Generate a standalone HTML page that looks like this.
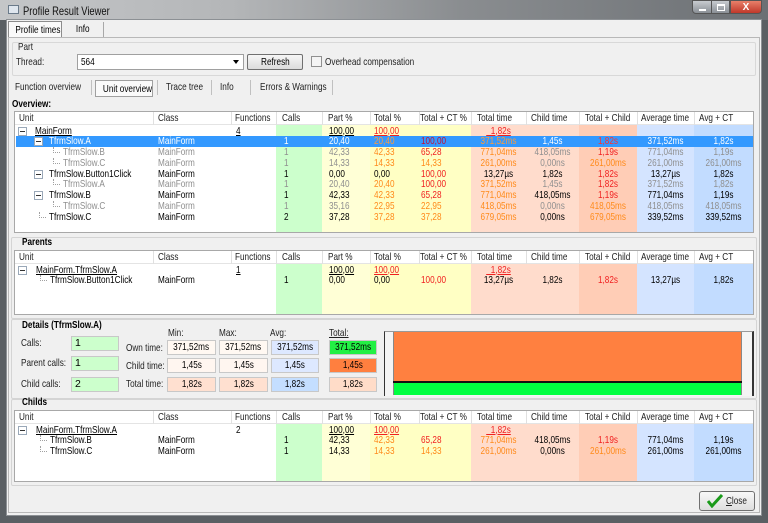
<!DOCTYPE html>
<html><head><meta charset="utf-8"><style>
*{margin:0;padding:0;box-sizing:border-box}
body{width:768px;height:523px;overflow:hidden;position:relative;background:#5a5f63;font-family:"Liberation Sans",sans-serif;font-size:10.5px;color:#000}
.abs{position:absolute}
.title{left:0;top:0;width:768px;height:20px;background:linear-gradient(90deg,#c4c6c8 0%,#b4b6b8 30%,#8a8d90 60%,#6c7074 100%)}
.client{left:6px;top:19px;width:756px;height:497px;background:#f0f0f0;border:1px solid #8c9094}
.g{position:absolute;left:14px;width:740px;background:#fff;border:1px solid #a8a8a8;overflow:hidden}
.g .bg{position:absolute;top:13px;bottom:0}
.hd{position:absolute;left:0;top:0;right:0;height:13px;background:#fff;border-bottom:1px solid #e4e4e4}
.hd span{position:absolute;top:0;line-height:13px;color:#222;font-size:10.5px;white-space:nowrap}
.hd i{position:absolute;top:0;height:13px;width:1px;background:#e0e0e0}
.r{position:absolute;left:0;width:740px;height:11px}
.r span{position:absolute;top:0;line-height:11px;white-space:nowrap}
.r span,.hd span,.lb,.sec,.tl{transform:scaleX(.78);transform-origin:0 0;white-space:nowrap}
.z{display:inline-block;transform:scaleX(.78);transform-origin:50% 0;white-space:nowrap}
.a{left:4px}.b{left:143px}.f{left:221px}.k{left:269px}.p{left:314px}.t{left:359px}.x{left:406px}
.r span.tt,.r span.ct,.r span.tc,.r span.av,.r span.ac{transform-origin:50% 0}
.tt{left:456px;width:55px;text-align:center}.ct{left:511px;width:53px;text-align:center}.tc{left:564px;width:58px;text-align:center}.av{left:622px;width:57px;text-align:center}.ac{left:679px;width:59px;text-align:center}
.gr span{color:#8f8f8f}
.r span.o{color:#ff8a1a}.r span.rd{color:#f02020}
.u{text-decoration:underline}
.mb{position:absolute;width:9px;height:9px;border:1px solid #9aa8b8;background:#fff;top:1px}
.mb::after{content:"";position:absolute;left:1px;top:3px;width:5px;height:1px;background:#333}
.dl{position:absolute;border-left:1px dotted #a0a0a0;border-bottom:1px dotted #a0a0a0;width:7px;height:6px;top:0}
.sel{background:#3399ff}
.sel span{color:#fff}
.panel{position:absolute;left:11px;width:746px;border:1px solid #d4d4d4;border-radius:2px}
.sec{position:absolute;font-weight:bold;font-size:10.5px}
.box{position:absolute;height:15px;border:1px solid #c8c8c8;line-height:13px;text-align:center;font-size:10.5px}
.lb{position:absolute;font-size:10.5px;color:#222}
</style></head><body>
<div class="abs title"></div>
<div class="abs" style="left:8px;top:5px;width:11px;height:9px;background:#dfe6ee;border:1px solid #6a7a8a"></div>
<div class="abs tl" style="left:23px;top:4px;font-size:12px;color:#111">Profile Result Viewer</div>
<div class="abs" style="left:692px;top:0;width:20px;height:14px;background:linear-gradient(#c8ccd0,#8a9096);border:1px solid #555;border-radius:0 0 0 4px"><div class="abs" style="left:6px;top:8px;width:7px;height:2px;background:#fff"></div></div>
<div class="abs" style="left:711px;top:0;width:19px;height:14px;background:linear-gradient(#c8ccd0,#8a9096);border:1px solid #555"><div class="abs" style="left:5px;top:3px;width:8px;height:7px;border:1px solid #fff;border-top-width:2px"></div></div>
<div class="abs" style="left:730px;top:0;width:32px;height:14px;background:linear-gradient(#e8806a,#c0382a);border:1px solid #555;border-radius:0 0 4px 0;color:#fff;font-weight:bold;text-align:center;font-size:10px;line-height:13px">X</div>

<div class="abs client"></div>
<div class="abs" style="left:8px;top:21px;width:54px;height:17px;background:#fafafa;border:1px solid #8c8c8c;border-bottom:none;line-height:16px;text-align:center"><span class="z">Profile times</span></div>
<div class="abs" style="left:63px;top:22px;width:41px;height:16px;border-right:1px solid #a8a8a8;line-height:14px;text-align:center"><span class="z">Info</span></div>
<div class="abs" style="left:8px;top:37px;width:752px;height:476px;border:1px solid #b8b8b8;background:#f0f0f0"></div>
<div class="abs" style="left:12px;top:42px;width:744px;height:34px;border:1px solid #d8d8d8;border-radius:2px"></div>
<div class="lb" style="left:18px;top:41px">Part</div>
<div class="lb" style="left:16px;top:56px">Thread:</div>
<div class="abs" style="left:77px;top:54px;width:167px;height:16px;background:#fff;border:1px solid #a0a0a0;line-height:14px;padding-left:3px"><span class="z" style="transform-origin:0 0">564</span><span class="abs" style="right:4px;top:5px;border-left:3px solid transparent;border-right:3px solid transparent;border-top:4px solid #000"></span></div>
<div class="abs" style="left:247px;top:54px;width:56px;height:16px;background:linear-gradient(#f6f6f6,#dcdcdc);border:1px solid #707070;border-radius:2px;line-height:14px;text-align:center"><span class="z">Refresh</span></div>
<div class="abs" style="left:311px;top:56px;width:11px;height:11px;background:#f4f4f4;border:1px solid #909090"></div>
<div class="lb" style="left:325px;top:56px">Overhead compensation</div>
<div class="lb" style="left:15px;top:81px">Function overview</div>
<div class="abs" style="left:91px;top:80px;width:1px;height:15px;background:#c0c0c0"></div>
<div class="abs" style="left:95px;top:80px;width:58px;height:17px;border:1px solid #a0a0a0;background:#fafafa;line-height:16px;text-align:center"><span class="z">Unit overview</span></div>
<div class="abs" style="left:157px;top:80px;width:1px;height:15px;background:#c0c0c0"></div>
<div class="lb" style="left:166px;top:81px">Trace tree</div>
<div class="abs" style="left:211px;top:80px;width:1px;height:15px;background:#c0c0c0"></div>
<div class="lb" style="left:220px;top:81px">Info</div>
<div class="abs" style="left:250px;top:80px;width:1px;height:15px;background:#c0c0c0"></div>
<div class="lb" style="left:260px;top:81px">Errors &amp; Warnings</div>
<div class="abs" style="left:332px;top:80px;width:1px;height:15px;background:#c0c0c0"></div>

<div class="sec" style="left:12px;top:98px">Overview:</div>

<div class="g" style="top:111px;height:122px">
<div class="bg" style="left:261px;width:46px;background:#ccffcc"></div>
<div class="bg" style="left:307px;width:48px;background:#ffffd6"></div>
<div class="bg" style="left:355px;width:101px;background:#ffffc4"></div>
<div class="bg" style="left:456px;width:108px;background:#ffdccc"></div>
<div class="bg" style="left:564px;width:58px;background:#ffcdb6"></div>
<div class="bg" style="left:622px;width:57px;background:#d4e4ff"></div>
<div class="bg" style="left:679px;width:59px;background:#c2dcff"></div>
<div class="hd"><span style="left:4px">Unit</span><i style="left:138px"></i><span style="left:143px">Class</span><i style="left:216px"></i><span style="left:220px">Functions</span><i style="left:261px"></i><span style="left:267px">Calls</span><i style="left:307px"></i><span style="left:313px">Part %</span><i style="left:355px"></i><span style="left:359px">Total %</span><i style="left:404px"></i><span style="left:405px">Total + CT %</span><i style="left:456px"></i><span style="left:462px">Total time</span><i style="left:511px"></i><span style="left:516px">Child time</span><i style="left:564px"></i><span style="left:570px">Total + Child</span><i style="left:622px"></i><span style="left:626px">Average time</span><i style="left:679px"></i><span style="left:684px">Avg + CT</span></div>

<div class="r" style="top:13.5px"><i class="mb" style="left:3px"></i><span class="u" style="left:20px">MainForm</span><span class="f u">4</span><span class="p u">100,00</span><span class="t u rd">100,00</span><span class="tt u rd">&nbsp;&nbsp;1,82s</span></div>
<div class="r sel" style="top:24.25px;left:1px;width:737px"><i class="mb" style="left:18px"></i><span style="left:33px">TfrmSlow.A</span><span class="b" style="left:142px">MainForm</span><span class="k" style="left:268px">1</span><span class="p" style="left:313px">20,40</span><span class="t o" style="left:358px;color:#ff9a3a">20,40</span><span class="x" style="left:405px;color:#c0103a">100,00</span><span class="tt" style="left:455px;color:#ff9a3a">371,52ms</span><span class="ct" style="left:510px">1,45s</span><span class="tc" style="left:563px;color:#ff3030">1,82s</span><span class="av" style="left:621px">371,52ms</span><span class="ac" style="left:678px">1,82s</span></div>
<div class="r gr" style="top:35px"><i class="dl" style="left:38px"></i><span style="left:48px">TfrmSlow.B</span><span class="b">MainForm</span><span class="k">1</span><span class="p">42,33</span><span class="t o">42,33</span><span class="x rd">65,28</span><span class="tt o">771,04ms</span><span class="ct">418,05ms</span><span class="tc rd">1,19s</span><span class="av">771,04ms</span><span class="ac">1,19s</span></div>
<div class="r gr" style="top:45.75px"><i class="dl" style="left:38px"></i><span style="left:48px">TfrmSlow.C</span><span class="b">MainForm</span><span class="k">1</span><span class="p">14,33</span><span class="t o">14,33</span><span class="x o">14,33</span><span class="tt o">261,00ms</span><span class="ct">0,00ns</span><span class="tc o">261,00ms</span><span class="av">261,00ms</span><span class="ac">261,00ms</span></div>
<div class="r" style="top:56.5px"><i class="mb" style="left:19px"></i><span style="left:34px">TfrmSlow.Button1Click</span><span class="b">MainForm</span><span class="k">1</span><span class="p">0,00</span><span class="t">0,00</span><span class="x rd">100,00</span><span class="tt">13,27µs</span><span class="ct">1,82s</span><span class="tc rd">1,82s</span><span class="av">13,27µs</span><span class="ac">1,82s</span></div>
<div class="r gr" style="top:67.25px"><i class="dl" style="left:38px"></i><span style="left:48px">TfrmSlow.A</span><span class="b">MainForm</span><span class="k">1</span><span class="p">20,40</span><span class="t o">20,40</span><span class="x rd">100,00</span><span class="tt o">371,52ms</span><span class="ct">1,45s</span><span class="tc rd">1,82s</span><span class="av">371,52ms</span><span class="ac">1,82s</span></div>
<div class="r" style="top:78px"><i class="mb" style="left:19px"></i><span style="left:34px">TfrmSlow.B</span><span class="b">MainForm</span><span class="k">1</span><span class="p">42,33</span><span class="t o">42,33</span><span class="x rd">65,28</span><span class="tt o">771,04ms</span><span class="ct">418,05ms</span><span class="tc rd">1,19s</span><span class="av">771,04ms</span><span class="ac">1,19s</span></div>
<div class="r gr" style="top:88.75px"><i class="dl" style="left:38px"></i><span style="left:48px">TfrmSlow.C</span><span class="b">MainForm</span><span class="k">1</span><span class="p">35,16</span><span class="t o">22,95</span><span class="x o">22,95</span><span class="tt o">418,05ms</span><span class="ct">0,00ns</span><span class="tc o">418,05ms</span><span class="av">418,05ms</span><span class="ac">418,05ms</span></div>
<div class="r" style="top:99.5px"><i class="dl" style="left:24px"></i><span style="left:34px">TfrmSlow.C</span><span class="b">MainForm</span><span class="k">2</span><span class="p">37,28</span><span class="t o">37,28</span><span class="x o">37,28</span><span class="tt o">679,05ms</span><span class="ct">0,00ns</span><span class="tc o">679,05ms</span><span class="av">339,52ms</span><span class="ac">339,52ms</span></div>
</div>

<div class="panel" style="top:237px;height:82px"></div>
<div class="sec" style="left:22px;top:236px">Parents</div>
<div class="g" style="top:250px;height:65px">
<div class="bg" style="left:261px;width:46px;background:#ccffcc"></div>
<div class="bg" style="left:307px;width:48px;background:#ffffd6"></div>
<div class="bg" style="left:355px;width:101px;background:#ffffc4"></div>
<div class="bg" style="left:456px;width:108px;background:#ffdccc"></div>
<div class="bg" style="left:564px;width:58px;background:#ffcdb6"></div>
<div class="bg" style="left:622px;width:57px;background:#d4e4ff"></div>
<div class="bg" style="left:679px;width:59px;background:#c2dcff"></div>
<div class="hd"><span style="left:4px">Unit</span><i style="left:138px"></i><span style="left:143px">Class</span><i style="left:216px"></i><span style="left:220px">Functions</span><i style="left:261px"></i><span style="left:267px">Calls</span><i style="left:307px"></i><span style="left:313px">Part %</span><i style="left:355px"></i><span style="left:359px">Total %</span><i style="left:404px"></i><span style="left:405px">Total + CT %</span><i style="left:456px"></i><span style="left:462px">Total time</span><i style="left:511px"></i><span style="left:516px">Child time</span><i style="left:564px"></i><span style="left:570px">Total + Child</span><i style="left:622px"></i><span style="left:626px">Average time</span><i style="left:679px"></i><span style="left:684px">Avg + CT</span></div>
<div class="r" style="top:13.5px"><i class="mb" style="left:3px"></i><span class="u" style="left:21px">MainForm.TfrmSlow.A</span><span class="f u">1</span><span class="p u">100,00</span><span class="t u rd">100,00</span><span class="tt u rd">&nbsp;&nbsp;1,82s</span></div>
<div class="r" style="top:24.25px"><i class="dl" style="left:25px"></i><span style="left:35px">TfrmSlow.Button1Click</span><span class="b">MainForm</span><span class="k">1</span><span class="p">0,00</span><span class="t">0,00</span><span class="x rd">100,00</span><span class="tt">13,27µs</span><span class="ct">1,82s</span><span class="tc rd">1,82s</span><span class="av">13,27µs</span><span class="ac">1,82s</span></div>
</div>

<div class="panel" style="top:319px;height:80px"></div>
<div class="sec" style="left:22px;top:319px">Details (TfrmSlow.A)</div>
<div class="lb" style="left:21px;top:337px">Calls:</div>
<div class="lb" style="left:21px;top:357px">Parent calls:</div>
<div class="lb" style="left:21px;top:378px">Child calls:</div>
<div class="box" style="left:71px;top:336px;width:48px;background:#ccffcc;text-align:left;padding-left:3px">1</div>
<div class="box" style="left:71px;top:356px;width:48px;background:#ccffcc;text-align:left;padding-left:3px">1</div>
<div class="box" style="left:71px;top:377px;width:48px;background:#ccffcc;text-align:left;padding-left:3px">2</div>
<div class="lb" style="left:168px;top:327px">Min:</div>
<div class="lb" style="left:219px;top:327px">Max:</div>
<div class="lb" style="left:270px;top:327px">Avg:</div>
<div class="lb u" style="left:329px;top:327px">Total:</div>
<div class="lb" style="left:126px;top:342px">Own time:</div>
<div class="lb" style="left:126px;top:360px">Child time:</div>
<div class="lb" style="left:126px;top:378px">Total time:</div>
<div class="box" style="left:167px;top:340px;width:49px;background:#fff8f2"><span class="z">371,52ms</span></div>
<div class="box" style="left:219px;top:340px;width:49px;background:#fff8f2"><span class="z">371,52ms</span></div>
<div class="box" style="left:271px;top:340px;width:48px;background:#dde8ff"><span class="z">371,52ms</span></div>
<div class="box" style="left:329px;top:340px;width:48px;background:#22f044"><span class="z">371,52ms</span></div>
<div class="box" style="left:167px;top:358px;width:49px;background:#fff6f0"><span class="z">1,45s</span></div>
<div class="box" style="left:219px;top:358px;width:49px;background:#fff6f0"><span class="z">1,45s</span></div>
<div class="box" style="left:271px;top:358px;width:48px;background:#dde8ff"><span class="z">1,45s</span></div>
<div class="box" style="left:329px;top:358px;width:48px;background:#ff7f3f"><span class="z">1,45s</span></div>
<div class="box" style="left:167px;top:377px;width:49px;background:#ffe0d0"><span class="z">1,82s</span></div>
<div class="box" style="left:219px;top:377px;width:49px;background:#ffe0d0"><span class="z">1,82s</span></div>
<div class="box" style="left:271px;top:377px;width:48px;background:#c4deff"><span class="z">1,82s</span></div>
<div class="box" style="left:329px;top:377px;width:48px;background:#ffdcc8"><span class="z">1,82s</span></div>
<div class="abs" style="left:384px;top:331px;width:370px;height:65px;background:#f4f4f4;border-left:1px solid #333;border-right:2px solid #333;border-top:1px solid #999"></div>
<div class="abs" style="left:393px;top:332px;width:349px;height:49px;background:#ff8040;border-left:1px solid #888;border-right:1px solid #888"></div>
<div class="abs" style="left:393px;top:381px;width:349px;height:2px;background:#111"></div>
<div class="abs" style="left:393px;top:383px;width:349px;height:12px;background:#00ff40;border-left:1px solid #888;border-right:1px solid #888"></div>

<div class="panel" style="top:399px;height:87px"></div>
<div class="sec" style="left:22px;top:396px">Childs</div>
<div class="g" style="top:410px;height:72px">
<div class="bg" style="left:261px;width:46px;background:#ccffcc"></div>
<div class="bg" style="left:307px;width:48px;background:#ffffd6"></div>
<div class="bg" style="left:355px;width:101px;background:#ffffc4"></div>
<div class="bg" style="left:456px;width:108px;background:#ffdccc"></div>
<div class="bg" style="left:564px;width:58px;background:#ffcdb6"></div>
<div class="bg" style="left:622px;width:57px;background:#d4e4ff"></div>
<div class="bg" style="left:679px;width:59px;background:#c2dcff"></div>
<div class="hd"><span style="left:4px">Unit</span><i style="left:138px"></i><span style="left:143px">Class</span><i style="left:216px"></i><span style="left:220px">Functions</span><i style="left:261px"></i><span style="left:267px">Calls</span><i style="left:307px"></i><span style="left:313px">Part %</span><i style="left:355px"></i><span style="left:359px">Total %</span><i style="left:404px"></i><span style="left:405px">Total + CT %</span><i style="left:456px"></i><span style="left:462px">Total time</span><i style="left:511px"></i><span style="left:516px">Child time</span><i style="left:564px"></i><span style="left:570px">Total + Child</span><i style="left:622px"></i><span style="left:626px">Average time</span><i style="left:679px"></i><span style="left:684px">Avg + CT</span></div>
<div class="r" style="top:13.5px"><i class="mb" style="left:3px"></i><span class="u" style="left:21px">MainForm.TfrmSlow.A</span><span class="f">2</span><span class="p u">100,00</span><span class="t u rd">100,00</span><span class="tt u rd">&nbsp;&nbsp;1,82s</span></div>
<div class="r" style="top:24.25px"><i class="dl" style="left:25px"></i><span style="left:35px">TfrmSlow.B</span><span class="b">MainForm</span><span class="k">1</span><span class="p">42,33</span><span class="t o">42,33</span><span class="x rd">65,28</span><span class="tt o">771,04ms</span><span class="ct">418,05ms</span><span class="tc rd">1,19s</span><span class="av">771,04ms</span><span class="ac">1,19s</span></div>
<div class="r" style="top:35px"><i class="dl" style="left:25px"></i><span style="left:35px">TfrmSlow.C</span><span class="b">MainForm</span><span class="k">1</span><span class="p">14,33</span><span class="t o">14,33</span><span class="x o">14,33</span><span class="tt o">261,00ms</span><span class="ct">0,00ns</span><span class="tc o">261,00ms</span><span class="av">261,00ms</span><span class="ac">261,00ms</span></div>
</div>

<div class="abs" style="left:699px;top:491px;width:56px;height:20px;background:linear-gradient(#f8f8f8,#dedede);border:1px solid #707070;border-radius:3px"></div>
<svg class="abs" style="left:707px;top:494px" width="16" height="14" viewBox="0 0 16 14"><path d="M1 7 L5 12 L15 1" stroke="#1a9a1a" stroke-width="3" fill="none"/></svg>
<div class="lb" style="left:726px;top:495px"><span class="u">C</span>lose</div>
</body></html>
